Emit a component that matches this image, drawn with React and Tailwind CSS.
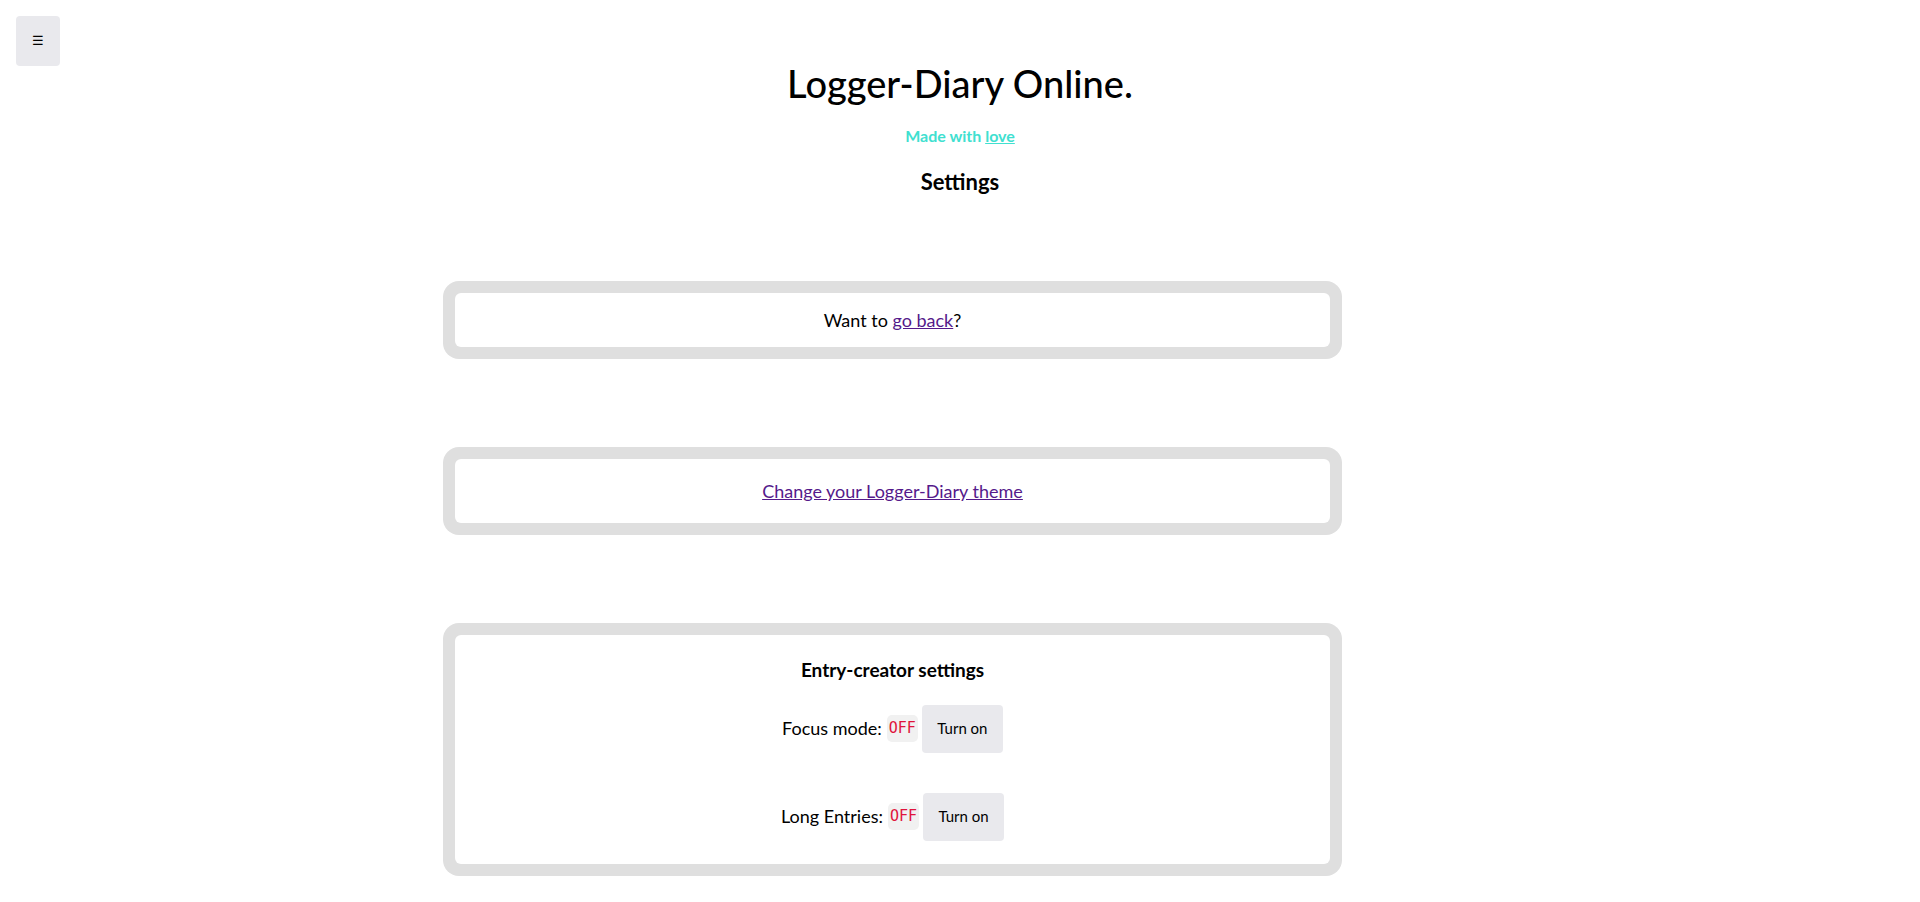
import React from "react";

function Card({ children, className = "" }) {
  return (
    <div className="ml-[443px] w-[899px] rounded-[16px] bg-[#dfdfdf] p-3">
      <div className={"rounded-[6px] bg-white flex flex-col items-center " + className}>
        {children}
      </div>
    </div>
  );
}

function Toggle({ label }) {
  return (
    <div className="flex items-center justify-center">
      <span className="text-[18px] mr-[5px]">{label}</span>
      <code className="font-['DejaVu_Sans_Mono',monospace] text-[15px] text-[#e0143c] bg-[#f1f1f1] rounded-[5px] px-[2px] py-[2px]">
        OFF
      </code>
      <button className="ml-[4px] w-[81px] h-[48px] rounded-[4px] bg-[#e9e9ed] text-[15px] text-black">
        Turn on
      </button>
    </div>
  );
}

export default function App() {
  return (
    <div className="min-h-screen bg-white text-black font-['Lato',sans-serif] relative">
      <button className="absolute left-4 top-4 w-[44px] h-[50px] rounded-[4px] bg-[#e9e9ed] text-[13px] flex items-center justify-center">
        ☰
      </button>

      <header className="flex flex-col items-center pt-[62px]">
        <h1 className="text-[38px] leading-[42px] font-medium">Logger-Diary Online.</h1>
        <p className="mt-[20px] text-[16px] font-bold text-[#40e0d0]">
          Made with <a href="#" className="underline">love</a>
        </p>
        <h2 className="mt-[17px] text-[22px] font-bold">Settings</h2>
      </header>

      <div className="mt-[83px]">
        <Card className="h-[54px] justify-center">
          <p className="text-[18px]">
            Want to <a href="#" className="underline text-[#551a8b]">go back</a>?
          </p>
        </Card>
      </div>

      <div className="mt-[88px]">
        <Card className="h-[64px] justify-center">
          <a href="#" className="underline text-[18px] text-[#551a8b]">
            Change your Logger-Diary theme
          </a>
        </Card>
      </div>

      <div className="mt-[88px] pb-6">
        <Card className="h-[229px] pt-[21px]">
          <h3 className="text-[19px] font-bold">Entry-creator settings</h3>
          <div className="mt-[20px]">
            <Toggle label="Focus mode:" />
          </div>
          <div className="mt-[40px]">
            <Toggle label="Long Entries:" />
          </div>
        </Card>
      </div>
    </div>
  );
}
